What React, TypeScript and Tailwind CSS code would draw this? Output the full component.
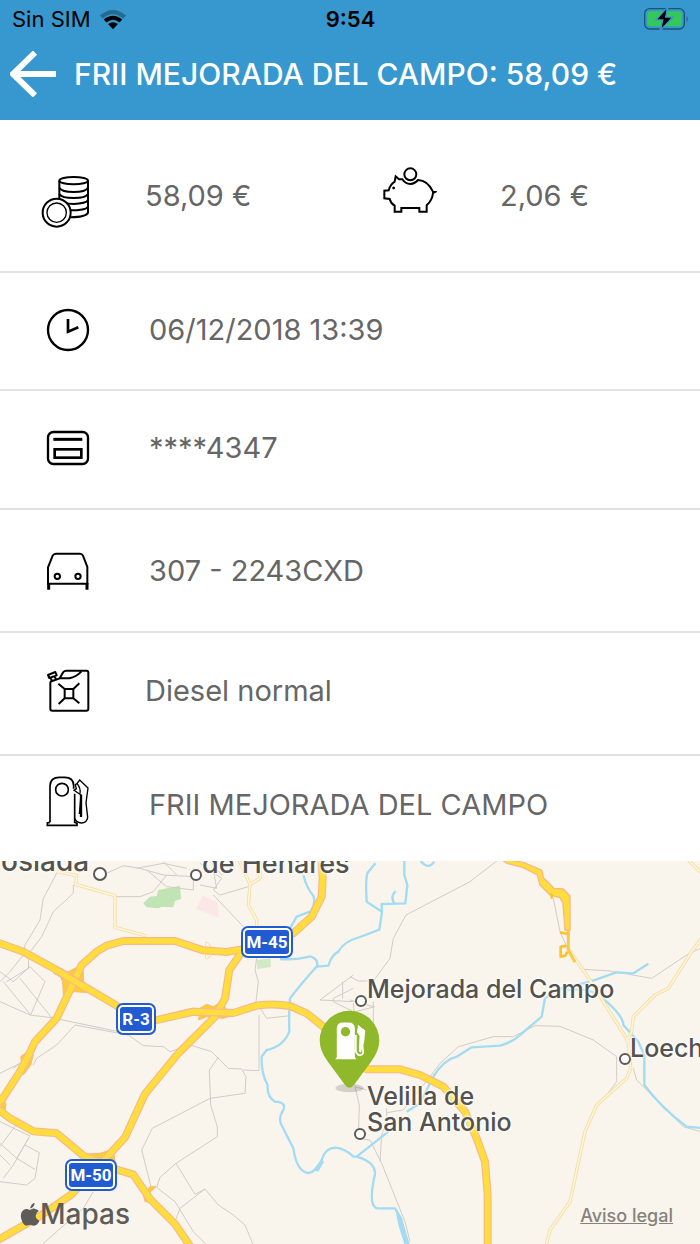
import type { ReactNode } from "react";
import { clsx } from "clsx";

interface IDetail {
  id: string;
  label: string;
  value: string;
  icon: ReactNode;
  className: string;
  iconClassName: string;
}

const WifiIcon = () => (
  <svg viewBox="0 0 84 64" className="h-[21px] w-7" aria-label="Wi-Fi">
    <path d="M2 20Q42 -14 82 20L73 29Q42 3 11 29Z" fill="#000" opacity=".3" />
    <path d="M14 32Q42 9 70 32L62 41Q42 24 22 41Z" />
    <path d="M27 46Q42 34 57 46L42 62Z" />
  </svg>
);

const BatteryIcon = () => (
  <svg viewBox="0 0 135 66" className="h-[22px] w-[45px]" aria-label="Battery">
    <rect x="2" y="2" width="119" height="61" rx="15" fill="none" stroke="#1c5273" strokeWidth="4" />
    <rect x="10" y="10" width="103" height="45" rx="9" fill="#34c759" />
    <path d="M128 23Q134 33 128 43Z" fill="#1c5273" />
    <path d="M71 -1L37 35H57L49 66L86 28H65Z" fill="#000" stroke="#3698ce" strokeWidth="5" />
    <path d="M67 4L41 34H59L53 60L81 29H62Z" />
  </svg>
);

const BackIcon = () => (
  <svg viewBox="0 0 138 138" className="h-[46px] w-[46px]" aria-hidden="true">
    <path d="M75 5L9 69L75 133M10 69H138" fill="none" stroke="#fff" strokeWidth="18" />
  </svg>
);

const CoinsIcon = () => (
  <svg viewBox="60 72 153 168" className="h-14 w-[51px]" fill="none" stroke="#000" strokeWidth="6">
    <ellipse cx="161" cy="92" rx="43" ry="11" />
    <path d="M118 92V152M204 92V188Q200 201 152 202" />
    <path d="M118 113Q125 126 161 126T204 113M118 132Q125 144 161 144T204 132M130 157Q145 162 161 162Q198 160 204 151M150 181Q198 181 204 170" />
    <circle cx="110" cy="188" r="42" fill="#fff" />
    <circle cx="110" cy="188" r="29" strokeWidth="4" />
  </svg>
);

const PiggyIcon = () => (
  <svg viewBox="66 48 165 144" className="h-12 w-[55px]" fill="none" stroke="#000" strokeWidth="6">
    <circle cx="151" cy="73" r="18" />
    <path d="M127 88Q136 102 151 102Q165 101 174 90Q203 91 219 125L225 126L219 129Q217 151 200 166V185H178V174H124V185H104V167Q92 160 89 147L73 145V122L86 121Q91 103 104 95L107 79L117 88Z" />
    <circle cx="101" cy="114" r="3" fill="#000" strokeWidth="3" />
  </svg>
);

const ClockIcon = () => (
  <svg viewBox="78 477 132 132" className="h-11 w-11" fill="none" stroke="#000">
    <circle cx="144" cy="543" r="60" strokeWidth="7" />
    <path d="M144 510V548L175 535" strokeWidth="8" />
  </svg>
);

const CardIcon = () => (
  <svg viewBox="78 60 132 108" className="h-9 w-11" fill="none" stroke="#000" strokeWidth="7">
    <rect x="84" y="66" width="120" height="96" rx="16" />
    <path d="M100 88H187" strokeWidth="9" />
    <rect x="104" y="118" width="80" height="25" strokeWidth="8" />
  </svg>
);

const CarIcon = () => (
  <svg viewBox="78 420 132 120" className="h-10 w-11" fill="none" stroke="#000" strokeWidth="6">
    <path d="M84 518V469L98 434Q101 428 108 428H180Q186 428 189 434L202 468V518Z" />
    <path d="M86 516V536M201 516V536" strokeWidth="9" />
    <circle cx="112" cy="496" r="8" />
    <circle cx="174" cy="496" r="8" />
  </svg>
);

const FuelCanIcon = () => (
  <svg viewBox="78 54 132 135" className="h-[45px] w-11" fill="none" stroke="#000" strokeWidth="6" strokeLinejoin="round">
    <path d="M119 85L130 66Q133 62 139 62H200Q205 62 205 68V177Q205 182 199 182H97Q91 182 91 176V99Q91 94 97 93L119 85H148Q168 81 184 65" />
    <path d="M84 75L106 66L110 76L88 84ZM92 84L96 93M104 80L108 88" />
    <path d="M134 117H160V145H134ZM134 117L115 101M160 117L178 100M134 145L116 162M160 145L178 160" />
  </svg>
);

const PumpIcon = () => (
  <svg viewBox="78 372 132 156" className="h-[52px] w-11" fill="none" stroke="#000" strokeWidth="5">
    <path d="M90 514V404Q91 379 118 379H134Q161 379 161 404V413M164 428V514L171 517V523H82V516L90 514" />
    <circle cx="126" cy="416" r="19" />
    <path d="M171 398L179 387L204 411L198 455L203 499Q201 515 184 516Q169 515 164 502M171 398L166 401L169 413L162 418L183 432L178 489" strokeWidth="4" />
    <path d="M183 431V498" strokeWidth="7" />
    <path d="M171 397Q183 412 180 428" strokeWidth="4" />
  </svg>
);

const PinIcon = () => (
  <svg viewBox="56 30 188 248" className="h-[83px] w-[63px]" role="img" aria-label="FRII Mejorada del Campo">
    <ellipse cx="150" cy="263" rx="42" ry="13" fill="#000" opacity=".15" />
    <path d="M150 262Q141 261 134 250L85 184Q61 151 61 121A89 89 0 0 1 239 121Q239 151 215 184L166 250Q159 261 150 262Z" fill="#8fb82a" />
    <path d="M112 171V84Q113 67 130 67H147Q165 67 166 84V171L171 177H107Z" fill="#fff" />
    <circle cx="138" cy="95" r="14" fill="#8fb82a" />
    <path d="M175 77L190 91L188 126L191 158Q187 167 179 165Q172 163 169 153V105" fill="none" stroke="#fff" strokeWidth="5" />
    <path d="M176 76L197 91L194 125L184 158L178 153L180 108L172 96Z" fill="#fff" />
  </svg>
);

const AppleIcon = () => (
  <svg viewBox="60 468 60 74" className="h-6 w-5" fill="#5d5c58" aria-hidden="true">
    <path d="M90 488Q93 473 104 470Q104 484 90 488Z" />
    <path d="M90 493Q99 485 109 490Q114 492 117 496Q106 503 108 514Q110 523 119 526Q112 541 103 541Q97 541 92 538Q87 538 83 540Q75 544 68 533Q57 513 65 498Q73 485 90 493Z" />
  </svg>
);

const majorRoads = [
  "M-20 258L70 290L180 350L225 378L350 452L410 500L475 494L580 470L700 474L770 452Q820 444 870 453L920 475L970 515L1040 600L1100 643L1200 643L1260 660L1330 695L1395 770L1430 850L1455 920L1463 1020V1180",
  "M963 0L968 70L965 125L935 185L880 235L800 268L725 283L680 291L610 286L525 258H370L320 272L290 290L245 330L215 395L170 490L105 560L90 592L60 650L5 735L-20 752",
  "M740 270L688 345L675 430L645 485L535 595L435 717L375 847L320 907L215 1018L120 1083L-20 1163",
  "M-20 752L30 790L100 829L170 835L250 902L345 942L400 959L450 1032L525 1107L575 1180",
];

const minorRoads = [
  "M170 50L230 62L227 88L345 122V217L440 243",
  "M710 0L750 88L745 150L770 195V220M780 10V70L750 88",
  "M1700 275L1760 360L1810 440L1885 560L1892 640L1880 670L1790 750L1755 830L1710 1040L1650 1125L1636 1180",
  "M2115 235L2075 290L2005 400L1965 420L1900 485L1895 530L1880 560",
  "M2060 10L2115 65",
  "M620 265V308L640 290Z",
];

const rivers = [
  "M910 60Q920 100 940 122Q948 150 930 170L890 185L870 220M840 312Q890 315 930 304Q955 310 952 335L985 332Q995 300 1015 290Q1030 260 1080 246L1138 224L1146 170L1100 140Q1096 80 1102 55L1126 25M1213 18V60L1222 90L1216 145L1145 147L1146 170M1183 145Q1170 125 1187 108M1262 18Q1285 46 1303 20",
  "M952 332Q900 390 870 430Q866 480 868 530Q850 575 800 585L785 605Q783 655 803 690Q800 725 825 740Q860 742 850 765Q835 785 843 807L880 880Q890 950 925 954Q950 950 965 915Q975 880 1005 878Q1035 880 1060 905H1070L1165 830",
  "M1070 905Q1138 925 1122 970L1117 1000Q1110 1060 1135 1060H1185L1203 1090L1225 1180",
  "M1220 770L1260 745L1300 665Q1330 615 1370 605L1415 577L1500 572Q1540 560 1560 540L1625 485L1635 430L1675 402L1770 380L1850 352L1900 355L1945 326",
  "M1700 405Q1780 395 1820 440Q1870 485 1870 510L1915 560L1933 600V690Q1985 760 2060 815L2115 820",
];

const streets = [
  "M170 55L130 130L120 195L75 270L70 300L30 350L0 380M220 90V115L160 170L125 245L87 295L85 340L20 380M0 350L40 380L90 335L135 380L92 480L10 380M0 440L90 480L155 488L380 535M60 370L155 488",
  "M320 55L370 32L420 40L490 60L580 65M410 40L490 25L560 40M440 45L500 95L580 105M345 125H420L460 110L500 60M580 40V105M600 25L665 70L640 105L660 120L745 95M640 120L730 215M600 90L650 100L640 45M490 20L530 60M630 20L665 60L700 30",
  "M770 310L765 345L775 380L768 440L800 490L870 482M777 480V647L730 645M225 510L170 570L110 610L100 630M225 510L385 540L430 572L490 575L510 590L570 570L635 590L655 610L685 640L725 642L738 665L735 715L630 730L457 820L425 885L453 995M655 607L628 645L632 750L652 815V845L528 925L480 967L470 997L525 1040L580 1130L620 1170M528 925L585 1018L615 1002L655 1050L700 1080L735 1110L760 1170M615 1002L540 1060L525 1100M280 1010L250 1060L130 1165M40 640L80 610M0 655L60 625",
  "M0 800L90 843L50 910L105 943M50 807L0 875M85 850L40 930L10 970M75 870L118 893L105 970L80 990L0 980M0 865L50 910M0 900L30 930",
  "M960 435L1060 360M960 435L1060 440M1000 430L1060 400M1000 430V440L1060 470M1028 380V430M1050 365L1075 378H1120L1170 310L1180 250L1218 180L1410 80L1490 18M1120 440V530M1050 435L1120 455M1060 445L1065 495M1065 470L1125 455M1660 130L1680 230L1705 285M1750 343L1830 348L1955 370L2060 300L2100 280",
  "M1290 665L1320 625L1375 575L1480 545H1540L1605 512L1680 514L1780 555L1850 605V680L1820 720M1900 640L1910 675L2050 815L2110 832M1065 695L1078 750L1075 850L1110 855L1145 925L1175 1000L1215 1100L1230 1160M1065 695L1100 705M1160 760V800L1145 840L1140 920M1160 773L1210 765L1290 665",
];

const MapCanvas = () => (
  <svg
    viewBox="0 18 2100 1149"
    preserveAspectRatio="xMidYMin slice"
    className="absolute inset-0 h-full w-full"
    fill="none"
    strokeLinejoin="round"
    aria-hidden="true"
  >
    <path d="M430 145L450 125L470 123L475 105L540 92L543 132L525 138L520 157L485 155L475 160L440 157Z" fill="#c1e4b4" />
    <path d="M770 315L812 310V336L772 342Z" fill="#cfeac4" />
    <path d="M608 122L652 140L657 188L588 162Z" fill="#fbe7e8" />
    {streets.map((d) => (
      <path key={d} d={d} stroke="#d0cdc7" strokeWidth="3" />
    ))}
    {rivers.map((d) => (
      <path key={d} d={d} stroke="#a3dbf2" strokeWidth="7" />
    ))}
    <path d="M940 945L965 912L972 920L955 950ZM1185 1060L1205 1090L1233 1180H1217L1195 1110Z" fill="#a3dbf2" />
    {minorRoads.map((d) => (
      <path key={d} d={d} stroke="#f4dba9" strokeWidth="10" />
    ))}
    {minorRoads.map((d) => (
      <path key={d} d={d} stroke="#fff6d4" strokeWidth="5" />
    ))}
    <g fill="#fdcb34" stroke="#f8b97c" strokeWidth="3">
      <path d="M172 348L205 350L240 332L250 350V385L264 413L225 410L190 420L188 380Z" />
      <path d="M596 495L600 460L620 448L640 455L665 440L680 465L710 478L670 490L620 485Z" />
      <path d="M245 898L300 895L340 882L348 945L320 920Z" />
      <path d="M430 1020L450 995H468L450 1012L455 1042L435 1040Z" />
      <path d="M62 605L82 590L100 600L92 630L70 660ZM8 735L18 745L15 765L30 785L0 775Z" />
    </g>
    {majorRoads.map((d) => (
      <path key={d} d={d} stroke="#f8b98a" strokeWidth="24" />
    ))}
    {majorRoads.map((d) => (
      <path key={d} d={d} stroke="#ffdd3d" strokeWidth="17" />
    ))}
    <path d="M165 345L250 392M540 479L580 470L700 474" stroke="#f8b98a" strokeWidth="24" />
    <path d="M150 334L265 403M530 482L580 470L700 474L730 465" stroke="#ffdd3d" strokeWidth="17" />
    <path d="M1500 10L1570 22L1625 45L1630 68L1662 100L1690 102L1710 123V226H1695L1689 145L1680 128L1650 120L1620 90L1612 60L1570 38L1520 25Z" fill="#ffdd3d" stroke="#f8b98a" strokeWidth="4" />
    <path d="M1705 222V285L1725 322" stroke="#fcc945" strokeWidth="9" />
    <path d="M1680 232L1704 237M1653 115L1656 131M1682 275L1700 273M1682 273V305L1696 302L1702 290" stroke="#fcc22f" strokeWidth="8" />
  </svg>
);

const RoadBadge = ({ name, className }: { name: string; className: string }) => (
  <span
    className={clsx(
      "absolute rounded-[7px] bg-[#215bd1] p-0.5 [font-family:'Liberation_Sans_Narrow',Roboto,sans-serif] text-[17px] leading-6 font-bold text-white",
      className
    )}
  >
    <span className="block rounded-[5px] border-2 border-white text-center whitespace-nowrap">
      {name}
    </span>
  </span>
);

const Town = ({ className }: { className: string }) => (
  <span className={clsx("absolute rounded-full border-2 border-[#5b5955] bg-white", className)} />
);

const labelClass =
  "absolute whitespace-nowrap leading-[26px] font-medium text-[#53524e] [text-shadow:0_0_2px_#fff,0_0_3px_#fff,0_0_4px_#fff]";

const StationMap = () => (
  <section aria-label="Mapa" className="relative min-h-80 flex-1 overflow-hidden bg-[#f9f5ec]">
    <MapCanvas />
    <Town className="top-[6px] left-[93px] size-[14px]" />
    <Town className="top-[8px] left-[190px] size-3" />
    <Town className="top-[134px] left-[355px] size-3" />
    <Town className="top-[267px] left-[354px] size-3" />
    <Town className="top-[192px] left-[619px] size-3" />
    <span className={clsx(labelClass, "top-[-13px] left-px text-[28px]")}>oslada</span>
    <span className={clsx(labelClass, "top-[-10px] left-[202px] text-[27px]")}>de Henares</span>
    <span className={clsx(labelClass, "top-[115px] left-[367px] text-[25px]")}>
      Mejorada del Campo
    </span>
    <span className={clsx(labelClass, "top-[222px] left-[367px] text-[25px]")}>
      Velilla de
      <br />
      San Antonio
    </span>
    <span className={clsx(labelClass, "top-[174px] left-[630px] text-[25px]")}>Loeches</span>
    <RoadBadge name="M-45" className="top-[65px] left-[241px] w-[52px]" />
    <RoadBadge name="R-3" className="top-[142px] left-[116px] w-10" />
    <RoadBadge name="M-50" className="top-[298px] left-[65px] w-[52px]" />
    <div className="absolute top-[149px] left-[318px]">
      <PinIcon />
    </div>
    <div className="absolute bottom-4 left-5 flex items-center text-[28px] leading-7 font-medium text-[#5d5c58]">
      <AppleIcon />
      Mapas
    </div>
    <a
      href="#aviso-legal"
      className="absolute right-[27px] bottom-4 text-[18px] leading-6 font-medium text-[#85827c] underline"
    >
      Aviso legal
    </a>
  </section>
);

const details: IDetail[] = [
  {
    id: "date",
    label: "Fecha",
    value: "06/12/2018 13:39",
    icon: <ClockIcon />,
    className: "h-[118px] border-b-2 pb-0.5",
    iconClassName: "w-[149px]",
  },
  {
    id: "card",
    label: "Tarjeta",
    value: "****4347",
    icon: <CardIcon />,
    className: "h-[119px] border-b-2 pb-1",
    iconClassName: "w-[149px]",
  },
  {
    id: "car",
    label: "Vehículo",
    value: "307 - 2243CXD",
    icon: <CarIcon />,
    className: "h-[123px] border-b-2",
    iconClassName: "w-[149px]",
  },
  {
    id: "fuel",
    label: "Combustible",
    value: "Diesel normal",
    icon: <FuelCanIcon />,
    className: "h-[123px] border-b-2 pb-1.5",
    iconClassName: "w-[145px]",
  },
  {
    id: "station",
    label: "Estación",
    value: "FRII MEJORADA DEL CAMPO",
    icon: <PumpIcon />,
    className: "h-[105px] pb-2",
    iconClassName: "w-[149px] pb-2",
  },
];

const App = () => {
  return (
    <div className="flex min-h-screen flex-col bg-white font-[Inter,'Liberation_Sans',sans-serif] text-[29px] text-[#666]">
      <header className="h-[120px] bg-[#3698ce]">
        <div className="grid h-[38px] grid-cols-3 items-center pr-[11px] pl-3 text-[22px] text-black">
          <div className="flex items-center gap-2">
            Sin SIM
            <WifiIcon />
          </div>
          <time className="text-center font-semibold">9:54</time>
          <div className="flex justify-end">
            <BatteryIcon />
          </div>
        </div>
        <div className="flex h-[72px] items-center gap-[18px] pl-2.5">
          <button type="button" aria-label="Atrás">
            <BackIcon />
          </button>
          <h1 className="text-[30px] font-medium whitespace-nowrap text-white">
            FRII MEJORADA DEL CAMPO: 58,09 €
          </h1>
        </div>
      </header>

      <main className="flex flex-1 flex-col">
        <div className="grid h-[153px] grid-cols-2 border-b-2 border-[#e2e2e2]">
          <div className="flex items-center">
            <div className="w-[145px] pt-3 pl-10">
              <CoinsIcon />
            </div>
            <span>58,09 €</span>
          </div>
          <div className="flex items-center">
            <div className="w-[150px] pb-3 pl-8">
              <PiggyIcon />
            </div>
            <span>2,06 €</span>
          </div>
        </div>

        {details.map((detail) => (
          <div
            key={detail.id}
            aria-label={detail.label}
            className={clsx("flex items-center border-[#e2e2e2]", detail.className)}
          >
            <div className={clsx("shrink-0 pl-[46px]", detail.iconClassName)}>{detail.icon}</div>
            <span>{detail.value}</span>
          </div>
        ))}

        <StationMap />
      </main>
    </div>
  );
};

export default App;
